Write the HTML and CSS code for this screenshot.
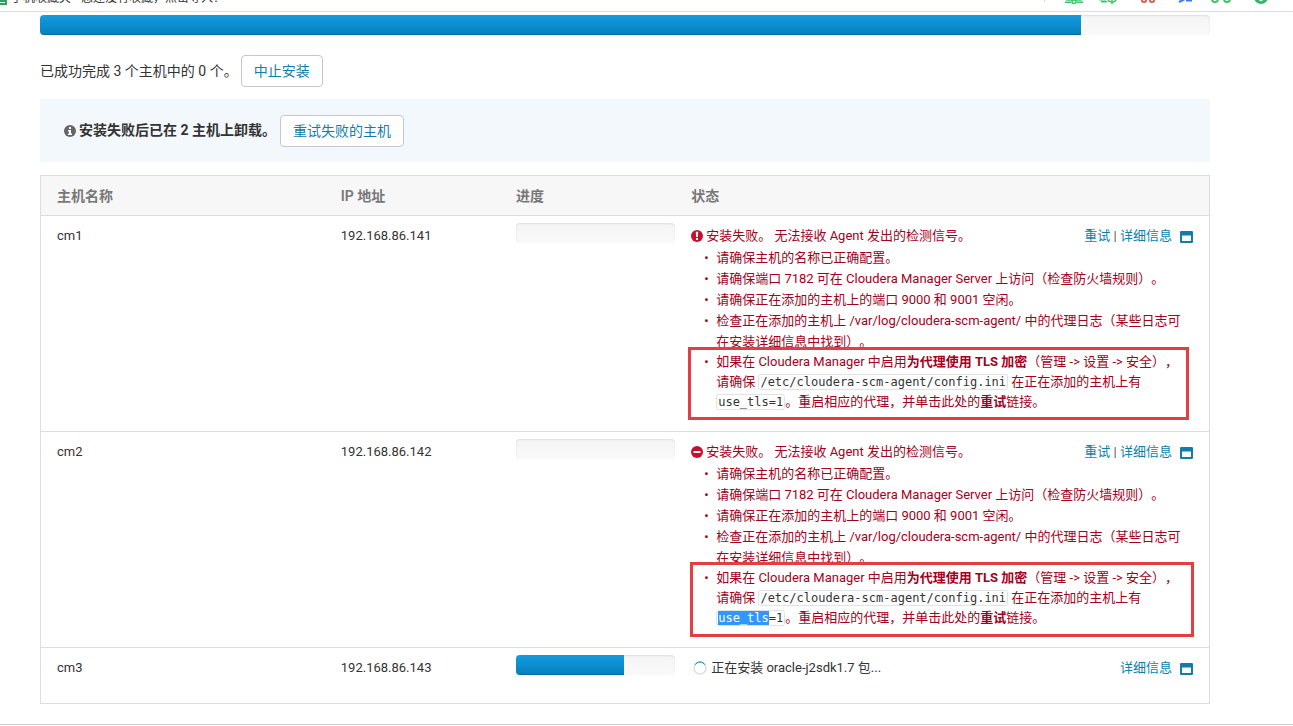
FILE: index.html
```html
<!DOCTYPE html>
<html lang="zh-CN">
<head>
<meta charset="utf-8">
<title>安装 Agent</title>
<link rel="stylesheet" href="styles.css">
</head>
<body>
<svg width="0" height="0" class="defs" aria-hidden="true">
  <symbol id="window" viewBox="0 0 13 12"><path fill-rule="evenodd" d="M1.200 0H11.800Q13 0 13 1.200V10.800Q13 12 11.800 12H1.200Q0 12 0 10.800V1.200Q0 0 1.200 0ZM2 4.500V10H11V4.500Z"/></symbol>
</svg>
<header class="bookmarks">
  <svg class="bookmark-icon" width="7" height="8" viewBox="0 0 7 8" aria-hidden="true"><path fill="#2aa45a" d="M0 0H7V8H0Z"/><path stroke="#fff" d="M0 5.500H5"/></svg>
  <span class="bookmark-title">手机收藏夹</span>
  <span>您还没有收藏，点击导入！</span>
  <svg class="toolbar-icons" width="229" height="6" viewBox="0 0 229 6" fill="none" aria-hidden="true">
    <path stroke="#ddd" d="M4.500 0V3"/>
    <g stroke="#3cc468" stroke-width="1.500">
      <path d="M27 0V1H41V0M25 3.200H31M37 3.200H43"/><circle cx="34" cy="2.500" r="2"/>
      <path d="M59 .8H66M61 2.800H67M72 0V5"/><path d="M68 0Q68 3 72 3T76 0"/>
    </g>
    <g stroke="#3cc468" stroke-width="2"><circle cx="175" cy="0" r="3"/><circle cx="187" cy="0" r="3"/></g>
    <g stroke="#ee5a50" stroke-width="2"><path d="M102 0V1.500Q102 3 104 3T106 1.500V0M110 0V1.500Q110 3 112 3T114 1.500V0"/></g>
    <path stroke="#3b78e7" stroke-width="2" d="M139 3L145 0M146 1.500H152"/>
    <circle cx="221" cy="-2" r="7" fill="#34b764"/><path stroke="#fff" d="M218 0L221 2L224 0"/>
  </svg>
</header>
<main class="page">
  <div class="progress" role="progressbar" aria-label="总进度" aria-valuenow="89"><div class="bar" style="width:89%"></div></div>
  <div class="summary"><span>已成功完成 3 个主机中的 0 个。</span><button type="button">中止安装</button></div>
  <section class="notice">
    <svg width="12" height="12" viewBox="0 0 12 12" aria-hidden="true"><circle cx="6" cy="6" r="6" fill="#666"/><path fill="#fff" d="M5 2H7V4H5ZM4 5H7V8.500H8V10H4V8.500H5V6.500H4Z"/></svg>
    <strong>安装失败后已在 2 主机上卸载。</strong><button type="button">重试失败的主机</button>
  </section>
  <table class="hosts">
    <thead><tr><th class="name">主机名称</th><th class="ip">IP 地址</th><th class="prog">进度</th><th>状态</th></tr></thead>
    <tbody>
      <tr>
        <td>cm1</td><td>192.168.86.141</td>
        <td class="prog"><div class="progress" role="progressbar" aria-label="cm1 进度" aria-valuenow="0"></div></td>
        <td><div class="status">
          <div class="status-head error">
            <svg width="12" height="12" viewBox="0 0 12 12" aria-hidden="true"><circle cx="6" cy="6" r="6" fill="#c8102e"/><path fill="#fff" d="M4.800 1.800H7.200L6.900 7H5.100ZM5 8H7V10H5Z"/></svg>
            <span>安装失败。 无法接收 Agent 发出的检测信号。</span>
            <span class="actions"><a href="#">重试</a> | <a href="#">详细信息<svg class="win" width="13" height="12" aria-hidden="true"><use href="#window"/></svg></a></span>
          </div>
          <ul class="error">
            <li>请确保主机的名称已正确配置。</li>
            <li>请确保端口 7182 可在 Cloudera Manager Server 上访问（检查防火墙规则）。</li>
            <li>请确保正在添加的主机上的端口 9000 和 9001 空闲。</li>
            <li>检查正在添加的主机上 /var/log/cloudera-scm-agent/ 中的代理日志（某些日志可在安装详细信息中找到）。</li>
            <li class="tls">如果在 Cloudera Manager 中启用<b>为代理使用 TLS 加密</b>（管理 -&gt; 设置 -&gt; 安全），请确保 <code>/etc/cloudera-scm-agent/config.ini</code> 在正在添加的主机上有 <code>use_tls=1</code>。重启相应的代理，并单击此处的<b>重试</b>链接。</li>
          </ul>
          <div class="mark mark-first"></div>
        </div></td>
      </tr>
      <tr>
        <td>cm2</td><td>192.168.86.142</td>
        <td class="prog"><div class="progress" role="progressbar" aria-label="cm2 进度" aria-valuenow="0"></div></td>
        <td><div class="status">
          <div class="status-head error">
            <svg width="12" height="12" viewBox="0 0 12 12" aria-hidden="true"><circle cx="6" cy="6" r="6" fill="#c8102e"/><path fill="#fff" d="M2.500 5H9.500V7H2.500Z"/></svg>
            <span>安装失败。 无法接收 Agent 发出的检测信号。</span>
            <span class="actions"><a href="#">重试</a> | <a href="#">详细信息<svg class="win" width="13" height="12" aria-hidden="true"><use href="#window"/></svg></a></span>
          </div>
          <ul class="error">
            <li>请确保主机的名称已正确配置。</li>
            <li>请确保端口 7182 可在 Cloudera Manager Server 上访问（检查防火墙规则）。</li>
            <li>请确保正在添加的主机上的端口 9000 和 9001 空闲。</li>
            <li>检查正在添加的主机上 /var/log/cloudera-scm-agent/ 中的代理日志（某些日志可在安装详细信息中找到）。</li>
            <li class="tls">如果在 Cloudera Manager 中启用<b>为代理使用 TLS 加密</b>（管理 -&gt; 设置 -&gt; 安全），请确保 <code>/etc/cloudera-scm-agent/config.ini</code> 在正在添加的主机上有 <code><span class="selected">use_tls</span>=1</code>。重启相应的代理，并单击此处的<b>重试</b>链接。</li>
          </ul>
          <div class="mark mark-second"></div>
        </div></td>
      </tr>
      <tr>
        <td>cm3</td><td>192.168.86.143</td>
        <td class="prog"><div class="progress" role="progressbar" aria-label="cm3 进度" aria-valuenow="68"><div class="bar" style="width:68%"></div></div></td>
        <td class="running"><div class="status-head">
          <svg class="spinner" width="14" height="14" viewBox="0 0 14 14" fill="none" aria-hidden="true"><circle cx="7" cy="7" r="6" stroke="#ddd" stroke-width="1.500"/><path stroke="#0b7fad" d="M2 3.700A6 6 0 0 1 12 3.700"/></svg>
          <span>正在安装 oracle-j2sdk1.7 包...</span>
          <span class="actions"><a href="#">详细信息<svg class="win" width="13" height="12" aria-hidden="true"><use href="#window"/></svg></a></span>
        </div></td>
      </tr>
    </tbody>
  </table>
</main>
</body>
</html>
```
FILE: styles.css
```css
* { box-sizing: border-box; }
body {
  margin: 0;
  background: #fff;
  color: #333;
  font: 13px/21px Roboto, "Noto Sans CJK SC", sans-serif;
  text-spacing-trim: space-all;
}
.defs { position: absolute; }
.bookmarks {
  display: flex;
  align-items: flex-end;
  height: 12px;
  padding: 0 24px 6px 0;
  overflow: hidden;
  border-bottom: 1px solid #ddd;
  font-size: 12px;
  line-height: 14px;
}
.bookmark-icon { margin-right: 4px; }
.bookmark-title { margin-right: 10px; }
.toolbar-icons { margin-left: auto; }
.page {
  padding: 3px 83px 20px 40px;
  border-bottom: 1px solid #ccc;
}
.progress {
  height: 20px;
  overflow: hidden;
  border-radius: 4px;
  background: linear-gradient(#f5f5f5, #f9f9f9);
  box-shadow: inset 0 1px 2px rgba(0, 0, 0, .1);
}
.bar {
  height: 100%;
  background: linear-gradient(#149bdf, #0480be);
  box-shadow: inset 0 -1px 0 rgba(0, 0, 0, .15);
}
.summary, .notice {
  display: flex;
  align-items: center;
  font-size: 14px;
}
.summary { margin: 20px 0 12px; gap: 3px; }
.notice {
  min-height: 63px;
  margin-bottom: 13px;
  padding: 15px 24px;
  background: #f3f8fc;
}
.notice svg { margin-right: 3px; }
.notice strong { margin-right: 4px; }
button {
  height: 32px;
  padding: 1px 12px 0;
  border: 1px solid #c3c8cc;
  border-radius: 4px;
  background: #fff;
  color: #0b7fad;
  font: inherit;
}
.hosts {
  width: 100%;
  table-layout: fixed;
  border: 1px solid #ddd;
  border-collapse: separate;
  border-spacing: 0;
}
th {
  height: 39px;
  padding: 2px 16px 0;
  background: #f7f7f7;
  color: #777;
  font-size: 14px;
  font-weight: 600;
  text-align: left;
}
.name { width: 24.3%; }
.ip, th.prog { width: 15%; }
td {
  padding: 9px 16px 19px;
  border-top: 1px solid #ddd;
  vertical-align: top;
}
td.prog { padding-top: 7px; padding-right: 0; }
th.prog { padding-right: 0; }
.status { position: relative; }
.status-head { display: flex; align-items: center; height: 21px; }
.status-head svg { flex: none; margin-right: 3px; }
.status-head > .spinner { margin-left: 2px; margin-right: 4px; }
.running { padding-bottom: 25px; }
.error { color: #a5001b; }
.actions { margin-left: auto; color: #555; white-space: nowrap; }
a { color: #0b7fad; text-decoration: none; }
.status-head .win {
  margin: 0 0 0 8px;
  fill: #0b7fad;
  vertical-align: -3px;
}
ul { margin: 0; padding: 1px 4px 0 25px; list-style: none; }
li::before {
  content: "•";
  float: left;
  width: 12px;
  margin-left: -12px;
  font-size: 13px;
}
.tls { line-height: 20px; }
b, strong { font-weight: 700; }
code {
  padding: 0 1px;
  border: 1px solid #e1e1e8;
  border-radius: 3px;
  background: #fff;
  color: #333;
  font: 12px/16px "DejaVu Sans Mono", monospace;
}
.selected { background: #3297fd; color: #fff; }
.mark {
  position: absolute;
  border: 3px solid #e53e42;
  pointer-events: none;
}
.mark-first { inset: 122px 4px -8px -3px; }
.mark-second { inset: 121px -1px -9px -1px; }
```
